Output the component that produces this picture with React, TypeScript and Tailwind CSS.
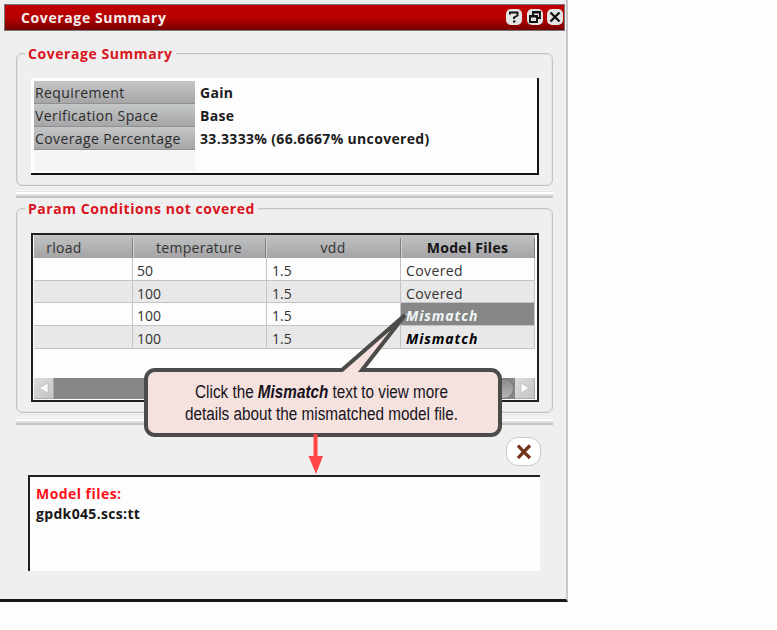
import type { ReactNode } from "react";

const summary = [
  ["Requirement", "Gain"],
  ["Verification Space", "Base"],
  ["Coverage Percentage", "33.3333% (66.6667% uncovered)"],
];

const rows = [
  { temperature: "50", vdd: "1.5", model: "Covered", style: "tracking-[.4px]" },
  { temperature: "100", vdd: "1.5", model: "Covered", style: "tracking-[.4px]" },
  { temperature: "100", vdd: "1.5", model: "Mismatch", style: "bg-[#868686] font-bold italic tracking-[.9px] text-[#f0f6f8]" },
  { temperature: "100", vdd: "1.5", model: "Mismatch", style: "font-bold italic tracking-[.9px] text-black" },
];

function TitleButton({ children }: { children: ReactNode }) {
  return (
    <button className="flex h-4 w-4 items-center justify-center rounded-[5px] bg-[#e4e4e4]">
      <svg width="14" height="14" viewBox="0 0 14 14" fill="none" stroke="#111" strokeWidth="1.9">
        {children}
      </svg>
    </button>
  );
}

function Group({ title, className, children }: { title: string; className: string; children: ReactNode }) {
  return (
    <section className={`ml-4 w-[537px] rounded-[6px] border border-[#c3c5c5] pl-[14px] shadow-[inset_0_0_0_1px_#e3e3e3] ${className}`}>
      <h2 className="-mt-[10px] -ml-[6px] h-5 w-fit whitespace-nowrap bg-[#f0eff0] px-[3px] text-[14px] leading-5 font-bold tracking-[.56px] text-[#d8141c]">
        {title}
      </h2>
      {children}
    </section>
  );
}

function Splitter() {
  return (
    <div className="ml-4 flex h-[9px] w-[537px] flex-col">
      <div className="h-px bg-[#f8f8f8]" />
      <div className="h-px bg-[#e2e3e2]" />
      <div className="h-[2px] bg-white" />
      <div className="h-[2px] bg-[#dde0de]" />
      <div className="h-[2px] bg-[#c2c5c3]" />
    </div>
  );
}

function ScrollButton({ points }: { points: string }) {
  return (
    <div className="flex w-[20px] items-center justify-center border-r border-b border-[#aaa] bg-linear-to-br from-[#dcdcdc] to-[#c4c4c4]">
      <svg width="10" height="12" viewBox="0 0 10 12">
        <polygon points={points} fill="#fafafa" stroke="#aaa" strokeWidth=".5" />
      </svg>
    </div>
  );
}

function Callout() {
  return (
    <div className="absolute top-[368px] left-[144px] h-[69px] w-[358px]">
      <div className="h-full rounded-[11px] border-4 border-[#4b4b49] bg-[#f5e2df] pt-[9px] pr-[3px] text-center font-['Liberation_Sans',Arial,sans-serif] text-[18px] leading-[22px] text-[#17131c]">
        <p className="-mx-8 scale-x-[.848] whitespace-nowrap">
          Click the <b className="italic">Mismatch</b> text to view more
        </p>
        <p className="-mx-8 scale-x-[.85] whitespace-nowrap">details about the mismatched model file.</p>
      </div>
      <svg className="absolute -top-[58px] left-[192px]" width="80" height="66" viewBox="0 0 80 66">
        <path d="M6 61 L73 2 L28 61 V65 H6 Z" fill="#f5e2df" />
        <path d="M2 60 H6 L69 5 L26 60 H32" fill="none" stroke="#4b4b49" strokeWidth="4" />
      </svg>
      <svg className="absolute top-[66px] left-[164px]" width="16" height="40" viewBox="0 0 16 40">
        <path d="M7.500 0 V24" stroke="#ff4545" strokeWidth="4" />
        <path d="M.5 22 H15 L8 40 Z" fill="#ff4545" />
      </svg>
    </div>
  );
}

export default function App() {
  return (
    <div className="h-[630px] w-[777px] bg-[#fdfdfd] font-['Open_Sans',sans-serif]">
      <main className="relative flex h-[602px] w-[568px] flex-col border-r-2 border-b-[3px] border-r-[#cac7cb] border-b-[#171717] bg-[#f0eff0] pt-1">
        <header className="ml-1 flex h-[27px] w-[561px] shrink-0 items-center border border-[#777] bg-linear-to-b from-[#c00000] via-[#b30000] via-55% to-[#760000] pr-px pl-4">
          <h1 className="mr-auto text-[14px] font-bold tracking-[.62px] text-[#f6eeee]">Coverage Summary</h1>
          <div className="flex -translate-y-px gap-[4.5px]">
            <TitleButton>
              <path d="M3 4.500 V2.500 H10.500 V5.500 L7 7.500 V9 M6 11.500 H8.500" />
            </TitleButton>
            <TitleButton>
              <path d="M5 5 V2 H12 V8 H9 M2 6 H9 V12 H2 Z M2 6.500 H9 M5 2.500 H12" />
            </TitleButton>
            <TitleButton>
              <path d="M2.500 2.500 L11.500 11.500 M11.500 2.500 L2.500 11.500" strokeWidth="2.300" />
            </TitleButton>
          </div>
        </header>

        <Group title="Coverage Summary" className="mt-[22px] h-[133px] shrink-0">
          <div className="mt-[14px] h-[97px] w-[508px] border-r-2 border-b-2 border-[#141414] bg-[#fdfdfd] pt-[3px] pl-[3px]">
            {summary.map(([label, value]) => (
              <div key={label} className="flex h-[23px] text-[14px] leading-[24px]">
                <div className="w-[161px] border-b border-[#919191] bg-linear-to-b from-[#c4c7c7] to-[#a7a5a8] pl-px tracking-[.4px] whitespace-nowrap text-[#2b2b2b]">
                  {label}
                </div>
                <div className="pl-[5px] font-bold tracking-[.33px] whitespace-nowrap text-[#1c1c1c]">{value}</div>
              </div>
            ))}
            <div className="h-[21px] w-[161px] bg-[#f6f5f6]" />
          </div>
        </Group>

        <div className="mt-[4px]"><Splitter /></div>

        <Group title="Param Conditions not covered" className="mt-[9px] h-[205px] shrink-0">
          <div className="mt-[14px] flex h-[169px] w-[508px] flex-col border-2 border-[#202020] bg-[#fdfdfd] pr-[2px] pl-px text-[14px] text-[#333]">
            <div className="grid h-[23px] shrink-0 grid-cols-[99px_133px_135px_134px] bg-linear-to-b from-[#c0c4c3] to-[#a5a3a6]">
              {["rload", "temperature", "vdd", "Model Files"].map((name) => (
                <div
                  key={name}
                  className="mt-[3px] h-[20px] border-r border-[#7d7d7d] text-center leading-[20px] tracking-[.28px] shadow-[1px_0_0_#d4d4d4] first:pr-[38px] last:font-bold last:text-[#151515] last:shadow-none"
                >
                  {name}
                </div>
              ))}
            </div>
            {rows.map((row, index) => (
              <div
                key={index}
                className="grid h-[22.7px] shrink-0 grid-cols-[99px_134px_134px_134px] grid-rows-[22.7px] leading-[26px] even:bg-[#fdfdfd] odd:bg-[#e9e8e9]"
              >
                <div className="border-r border-b border-[#c4c4c8]" />
                <div className="border-r border-b border-[#c4c4c8] pl-[4px]">{row.temperature}</div>
                <div className="border-r border-b border-[#c4c4c8] pl-[5px]">{row.vdd}</div>
                <div className={`border-r border-b border-[#c4c4c8] pl-[5px] ${row.style}`}>{row.model}</div>
              </div>
            ))}
            <div className="mt-auto mb-px flex h-[21px] w-[501px] bg-[#878787]">
              <ScrollButton points="9,1 0,6 9,11" />
              <div className="mr-px ml-auto w-[40px] rounded-r-full border border-[#777] bg-linear-to-b from-[#8b8b8b] to-[#b5b5b5]" />
              <ScrollButton points="1,1 9,6 1,11" />
            </div>
          </div>
        </Group>

        <div className="mt-[4px]"><Splitter /></div>

        <button className="mt-[11px] mr-[25px] flex h-[29px] w-[35px] shrink-0 items-center justify-center self-end rounded-[12px] border border-[#c9c7c8] bg-white">
          <svg width="16" height="16" viewBox="0 0 16 16" fill="none" stroke="#70351b" strokeWidth="3.300">
            <path d="M2 1.500 Q7 7.500 14 14 M14 1.500 Q8 7.500 2 14" />
          </svg>
        </button>

        <div className="mt-[9px] ml-[28px] h-[96px] w-[512px] shrink-0 border-t-2 border-l-2 border-[#202020] bg-[#fdfdfd] pt-[7px] pl-[6px] text-[14px] leading-5 font-bold">
          <p className="tracking-[.45px] text-[#ff1018]">Model files:</p>
          <p className="tracking-[.33px] text-[#171717]">gpdk045.scs:tt</p>
        </div>
        <Callout />
      </main>
    </div>
  );
}
